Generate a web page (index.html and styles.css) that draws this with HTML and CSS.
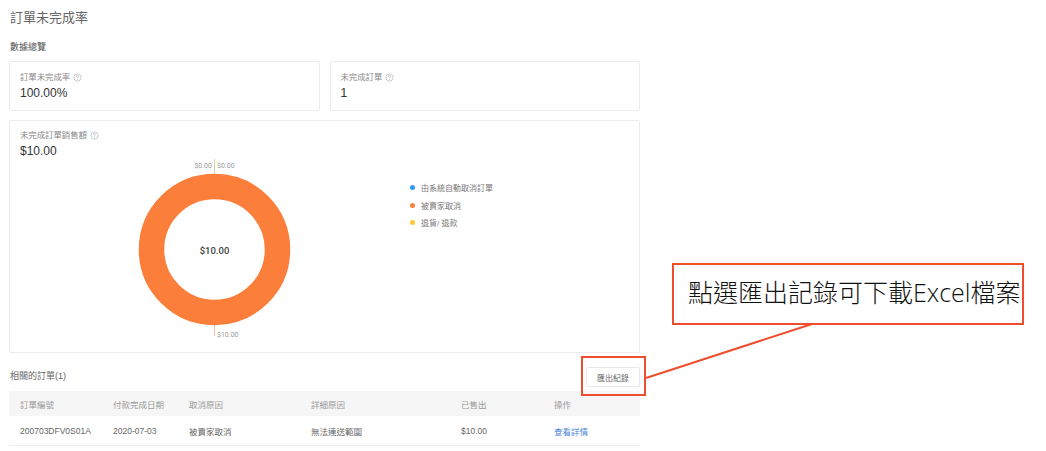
FILE: index.html
```html
<!DOCTYPE html>
<html lang="zh-Hant">
<head>
<meta charset="utf-8">
<title>訂單未完成率</title>
<link rel="stylesheet" href="styles.css">
</head>
<body>
<main class="page">
  <h1 class="title">訂單未完成率</h1>
  <h2 class="section">數據總覽</h2>
  <div class="stats">
    <section class="card stat">
      <div class="label">訂單未完成率 <svg class="help" viewBox="0 0 10 10"><circle cx="5" cy="5" r="4" /><path d="M3.8 4a1.2 1.2 0 1 1 1.8 1C5.2 5.300 5 5.500 5 6M5 7v.6" /></svg></div>
      <div class="value">100.00%</div>
    </section>
    <section class="card stat">
      <div class="label">未完成訂單 <svg class="help" viewBox="0 0 10 10"><circle cx="5" cy="5" r="4" /><path d="M3.8 4a1.2 1.2 0 1 1 1.8 1C5.2 5.300 5 5.500 5 6M5 7v.6" /></svg></div>
      <div class="value">1</div>
    </section>
  </div>
  <section class="card chart-card">
    <div class="label">未完成訂單銷售額 <svg class="help" viewBox="0 0 10 10"><circle cx="5" cy="5" r="4" /><path d="M3.8 4a1.2 1.2 0 1 1 1.8 1C5.2 5.300 5 5.500 5 6M5 7v.6" /></svg></div>
    <div class="value">$10.00</div>
    <div class="chart-body">
      <svg class="donut" width="380" height="190" viewBox="0 0 380 190">
        <line x1="194.500" y1="0" x2="194.500" y2="15" class="lead-green"/>
        <line x1="194.500" y1="165" x2="194.500" y2="177" class="lead-orange"/>
        <circle cx="194.500" cy="90.500" r="63" class="ring"/>
        <text x="192" y="9" text-anchor="end" class="tick">$0.00</text>
        <text x="197" y="9" class="tick">$0.00</text>
        <text x="197" y="178" class="tick">$10.00</text>
        <text x="194.500" y="94.500" text-anchor="middle" class="center">$10.00</text>
      </svg>
      <ul class="legend">
        <li><span class="dot blue"></span>由系統自動取消訂單</li>
        <li><span class="dot orange"></span>被賣家取消</li>
        <li><span class="dot yellow"></span>退貨/ 退款</li>
      </ul>
    </div>
  </section>
  <div class="related">
    <h2 class="related-title">相關的訂單(1)</h2>
    <button class="export">匯出紀錄</button>
  </div>
  <div class="table">
    <div class="row head">
      <span>訂單編號</span><span>付款完成日期</span><span>取消原因</span><span>詳細原因</span><span>已售出</span><span>操作</span>
    </div>
    <div class="row body-row">
      <span>200703DFV0S01A</span><span>2020-07-03</span><span>被賣家取消</span><span>無法連送範圍</span><span>$10.00</span><a href="#">查看詳情</a>
    </div>
  </div>
</main>
<div class="mark"></div>
<div class="callout">點選匯出記錄可下載Excel檔案</div>
<svg class="connector" width="170" height="58" viewBox="0 0 170 58"><line x1="167" y1="1" x2="1" y2="55"/></svg>
</body>
</html>
```
FILE: styles.css
```css
* { box-sizing: border-box; }
html, body { margin: 0; padding: 0; background: #fff; overflow: hidden; }
body {
  width: 1046px;
  height: 451px;
  position: relative;
  font-family: "Liberation Sans", "Noto Sans CJK TC", sans-serif;
  color: #333;
}
.page { width: 631px; margin-left: 9px; padding-top: 9px; }
.title { margin: 0; padding-left: 1px; font-size: 13px; line-height: 18px; font-weight: 400; color: #666; }
.section { margin: 12px 0 0; padding-left: 1px; font-size: 9px; line-height: 16px; font-weight: 400; color: #555; height: 22px; }
.stats { display: flex; gap: 10px; }
.card { border: 1px solid #ececec; border-radius: 2px; background: #fff; }
.stat { flex: 1; height: 50px; padding: 9px 10px 0; }
.label { font-size: 8.400px; line-height: 12px; color: #888; display: flex; align-items: center; gap: 3px; }
.help { width: 9px; height: 9px; fill: none; stroke: #aaa; stroke-width: .7; }
.value { font-size: 12px; line-height: 18px; margin-top: 1px; color: #333; }
.chart-card { margin-top: 9px; height: 233px; padding: 8px 10px 0; }
.chart-body { display: flex; position: relative; margin-top: -4px; }
.donut { margin-top: 3px; flex: none; }
.ring { fill: none; stroke: #fc7e3b; stroke-width: 25.500; }
.lead-green { stroke: #cfdc9c; stroke-width: 1; }
.lead-orange { stroke: #fbc3a2; stroke-width: 1; }
.tick { font-family: Roboto, sans-serif; font-size: 7px; fill: #999; }
.center { font-family: Roboto, sans-serif; font-size: 9.500px; font-weight: 500; fill: #444; }
.legend { list-style: none; margin: 23px 0 0 10px; padding: 0; font-size: 8px; color: #777; }
.legend li { display: flex; align-items: center; height: 17.500px; }
.dot { width: 5px; height: 5px; border-radius: 50%; margin-right: 6px; }
.blue { background: #2d9cf0; }
.orange { background: #fc7e3b; }
.yellow { background: #fdc92f; }
.related { display: flex; justify-content: space-between; align-items: flex-start; margin-top: 15px; height: 23px; }
.related-title { margin: 0; padding-left: 1px; font-size: 9px; line-height: 16px; font-weight: 400; color: #666; }
.export { width: 54px; height: 20px; margin-top: -1px; padding: 0; border: 1px solid #e8e8e8; border-radius: 2px; background: #fff; font: inherit; font-size: 8px; color: #666; }
.row { display: grid; grid-template-columns: 93px 76px 122px 150px 93px 1fr; padding-left: 11px; align-items: center; font-size: 8.500px; }
.head { height: 25px; background: #f6f6f6; color: #999; border-radius: 2px 2px 0 0; }
.body-row { height: 30px; border-bottom: 1px solid #eee; color: #666; }
.body-row a { color: #4a86d8; text-decoration: none; }
.mark { position: absolute; left: 581px; top: 356px; width: 65px; height: 40px; border: 2px solid #ee4e2e; }
.callout {
  position: absolute; left: 672px; top: 263px; width: 352px; height: 62px;
  border: 2px solid #ee4e2e; background: #fff; padding-left: 14px;
  font-family: "Open Sans", "Noto Sans CJK TC", sans-serif; font-size: 25px; font-weight: 300; line-height: 55px; color: #111; white-space: nowrap;
}
.connector { position: absolute; left: 645px; top: 323px; }
.connector line { stroke: #ee4e2e; stroke-width: 2; }
```
